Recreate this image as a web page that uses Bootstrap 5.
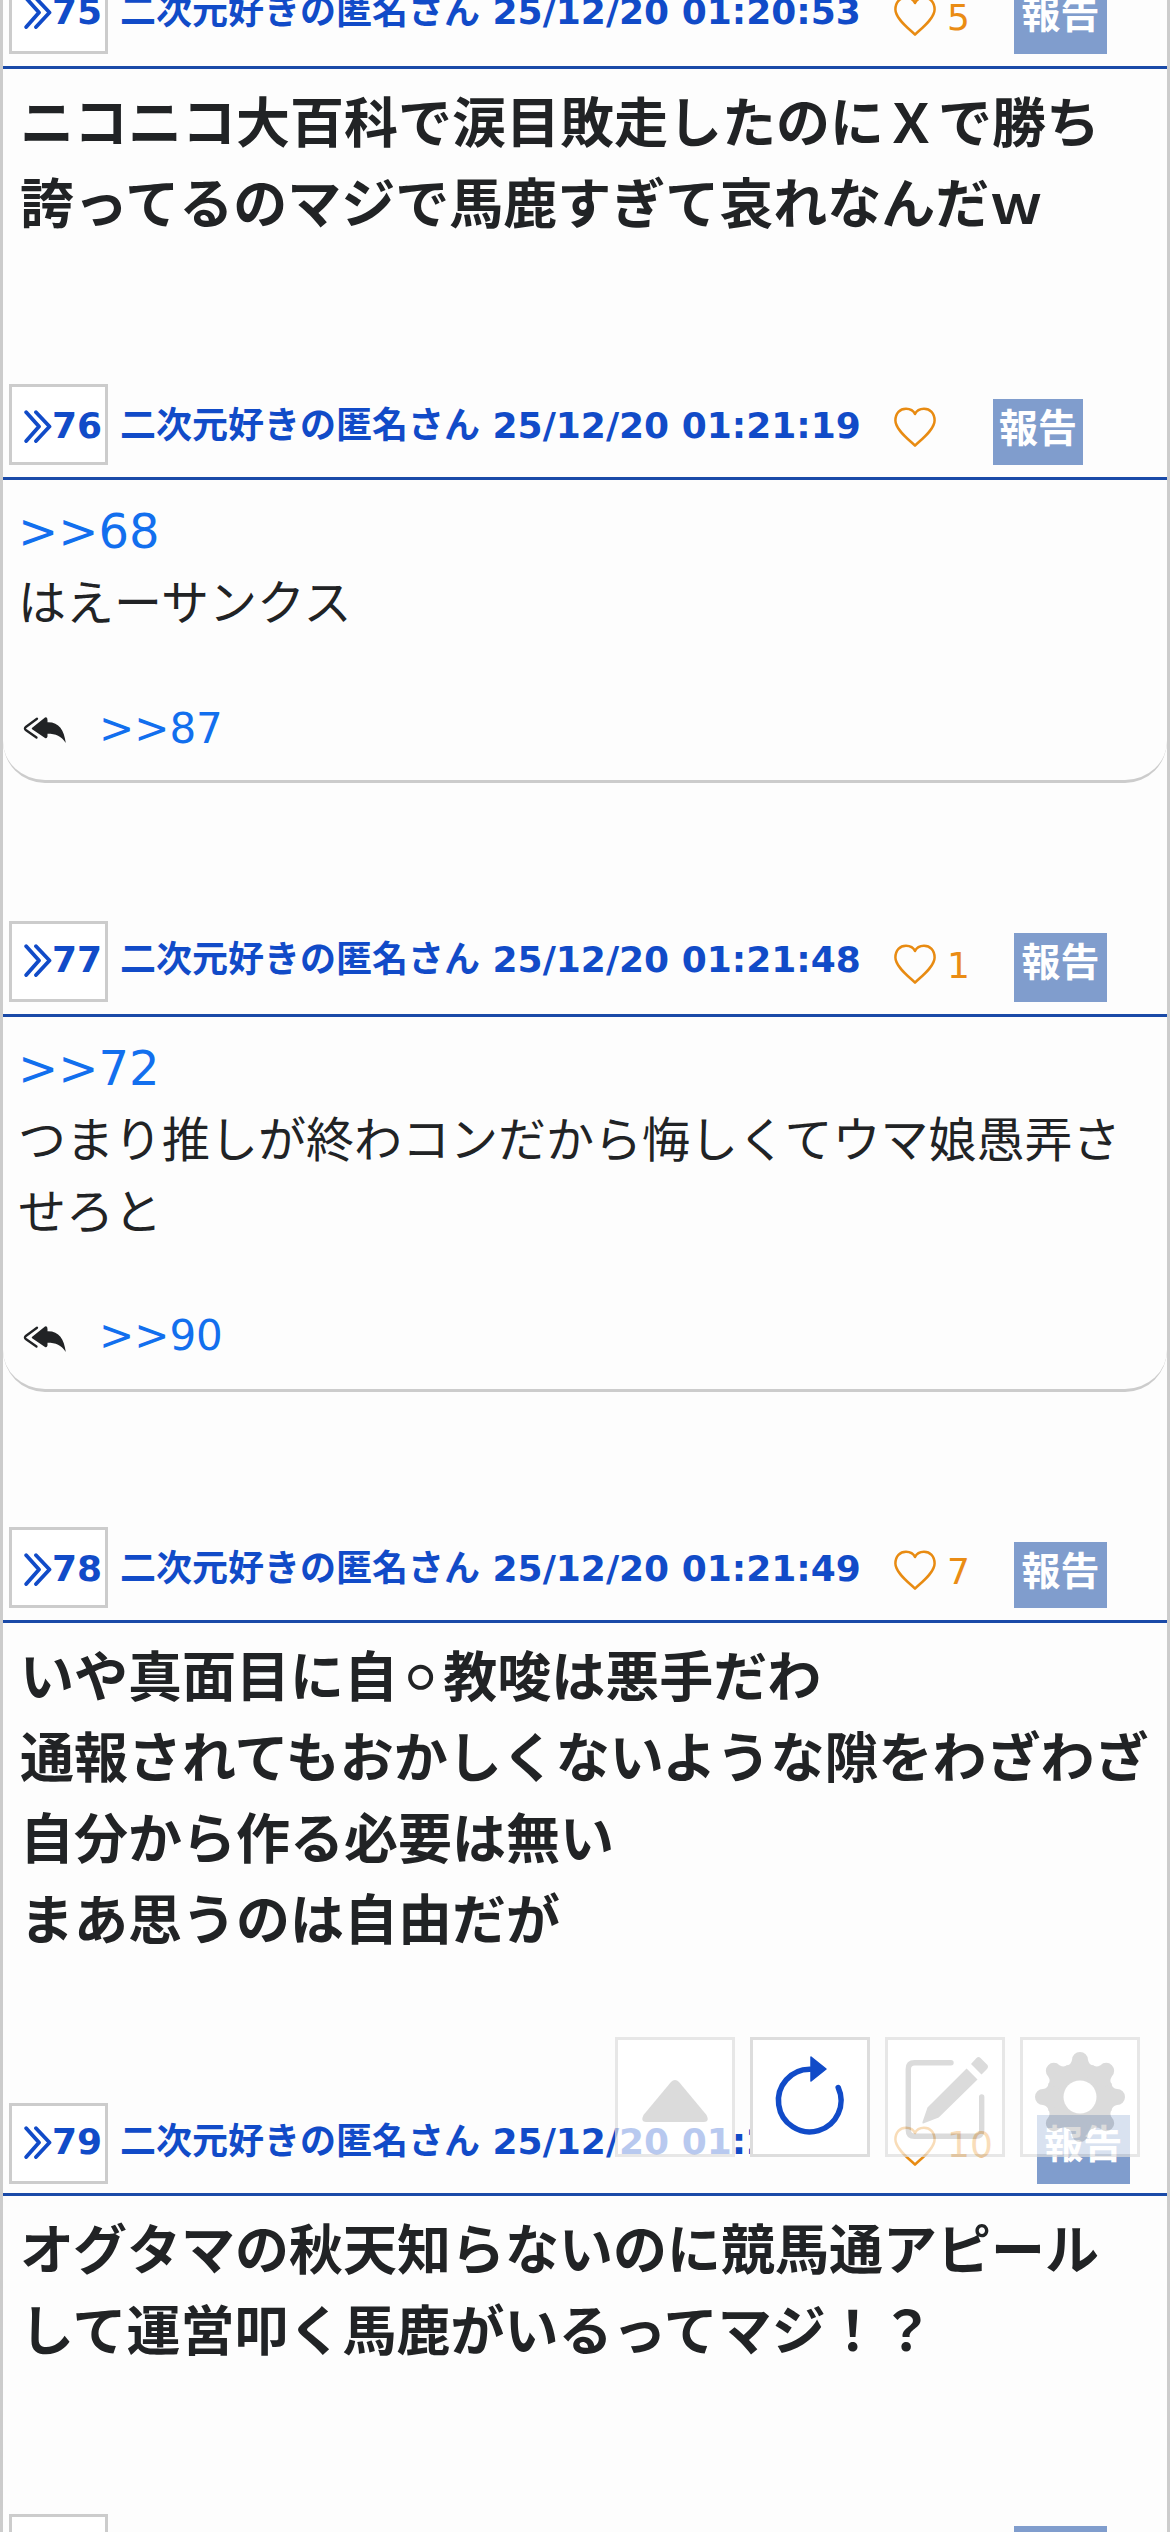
<!DOCTYPE html>
<html lang="ja">
<head>
<meta charset="utf-8">
<meta name="viewport" content="width=device-width, initial-scale=1">
<title>二次元好きの匿名さん</title>
<link href="https://cdn.jsdelivr.net/npm/bootstrap@5.3.0/dist/css/bootstrap.min.css" rel="stylesheet">
<style>
body{background:#fdfdfd;color:#212325;font-family:"DejaVu Sans","Noto Sans CJK JP",sans-serif;overflow:hidden}
.thread{height:2532px;border-left:3px solid #ccc;border-right:3px solid #ccc;overflow:hidden}
.thread-top{margin-top:-27px}
.res-head{--base:12px;height:96px;padding-left:6px;border-bottom:3px solid #1a4aa8;color:#114bc8;font-size:36px;line-height:54px}
.res-head.lowered{--base:15px}
.res-head.tight{height:93px}
.res-no{width:99px;height:81px;border:3px solid #ccc;background:#fff;padding:calc(var(--base) - 3px) 0 0 12px}
.res-no svg{width:28px;height:33px;margin-top:11px}
.res-name{margin:var(--base) 0 0 12px;width:741px}
.heart{width:42px;height:40px;margin:23px 0 0 33px}
.like-num{margin:18px 0 0 11px;color:#ea8c14}
.like-num.up{margin-top:15px}
.report{margin:12px 0 0 44px;width:93px;height:69px;background:#809dcd;color:#fff;font-size:39px;line-height:60px}
.report.short{height:66px;margin-top:15px}
.report.slim{width:90px;margin-left:46px}
.res-body{padding:15px 15px 0}
.strong-text{padding-left:17px;padding-right:13px;font-size:54px;line-height:81px;font-weight:700}
.plain-text{font-size:48px;line-height:72px}
.anchor{color:#126fee;text-decoration:none}
.rounded-end-card{border-bottom:3px solid #ccc;border-radius:0 0 42px 42px}
.replies{font-size:42px;line-height:63px;padding-bottom:20px}
.replies svg{width:43px;height:26px;margin:3px 0 0 5px}
.replies .anchor{margin-left:33px}
.replies.high{padding-bottom:22px}
.replies.high svg{margin-top:7px}
.post-75{height:315px}.post-76{height:303px;margin-bottom:138px}.post-77{height:375px;margin-bottom:135px}.post-78{height:480px}.post-79{height:318px}
.tools{right:30px;bottom:375px;gap:15px}
.tool{width:120px;height:120px;border:3px solid #ddd;background:#fff;color:#ccc;opacity:.7;padding:0}
.tool.active-tool{opacity:1;color:#114bc8}
.tool svg{display:block;width:114px;height:114px}
</style>
<script src="https://cdn.jsdelivr.net/npm/bootstrap@5.3.0/dist/js/bootstrap.bundle.min.js"></script>
</head>
<body>
<svg class="d-none">
  <symbol id="chev" viewBox="0 0 28 33"><path d="M2.200 2.200 15 16.500 2.200 31M12 2.200 25.500 16.500 12 31" fill="none" stroke="currentColor" stroke-width="3.800" stroke-linecap="round" stroke-linejoin="round"/></symbol>
  <symbol id="heart" viewBox="0 0 42 40"><path d="M21 38.600C16 33.500 1.400 23 1.400 13.500C1.400 6 6 1.700 12 1.700C16.500 1.700 19.500 3.600 21 7C22.500 3.600 25.500 1.700 30 1.700C36 1.700 40.600 6 40.600 13.500C40.600 23 26 33.500 21 38.600Z" fill="none" stroke="#e88b12" stroke-width="2.500" stroke-linejoin="round"/></symbol>
  <symbol id="reply" viewBox="0 0 43 26"><path d="M9.500 10.500 22 .6Q24.500-.4 24.500 3V5.300C36 5 41 13 42.800 26C38 19 33 16.800 24.500 16.800V19.500Q24 22 22 21L9.500 12.500Q8 11.500 9.500 10.500Z" fill="currentColor"/><path d="M14 1.800 2.800 10Q1 11.500 2.800 13L13.500 20.500" fill="none" stroke="currentColor" stroke-width="2.300" stroke-linecap="round"/></symbol>
</svg>
<main class="thread">
  <div class="thread-top">
    <article>
      <header class="res-head d-flex align-items-start">
        <div class="res-no d-flex align-items-start fw-bold"><svg><use href="#chev"/></svg>75</div>
        <div class="res-name fw-bold text-nowrap">二次元好きの匿名さん 25/12/20 01:20:53</div>
        <svg class="heart"><use href="#heart"/></svg><span class="like-num">5</span>
        <div class="report fw-bold text-center">報告</div>
      </header>
      <div class="res-body strong-text post-75">ニコニコ大百科で涙目敗走したのにＸで勝ち<br>誇ってるのマジで馬鹿すぎて哀れなんだｗ</div>
    </article>
    <article>
      <header class="res-head lowered d-flex align-items-start">
        <div class="res-no d-flex align-items-start fw-bold"><svg><use href="#chev"/></svg>76</div>
        <div class="res-name fw-bold text-nowrap">二次元好きの匿名さん 25/12/20 01:21:19</div>
        <svg class="heart"><use href="#heart"/></svg><span class="like-num"></span>
        <div class="report short slim fw-bold text-center">報告</div>
      </header>
      <div class="res-body rounded-end-card plain-text d-flex flex-column post-76">
        <div><a class="anchor" href="#">&gt;&gt;68</a><br>はえーサンクス</div>
        <div class="replies mt-auto d-flex align-items-center"><svg><use href="#reply"/></svg><a class="anchor" href="#">&gt;&gt;87</a></div>
      </div>
    </article>
    <article>
      <header class="res-head d-flex align-items-start">
        <div class="res-no d-flex align-items-start fw-bold"><svg><use href="#chev"/></svg>77</div>
        <div class="res-name fw-bold text-nowrap">二次元好きの匿名さん 25/12/20 01:21:48</div>
        <svg class="heart"><use href="#heart"/></svg><span class="like-num">1</span>
        <div class="report fw-bold text-center">報告</div>
      </header>
      <div class="res-body rounded-end-card plain-text d-flex flex-column post-77">
        <div><a class="anchor" href="#">&gt;&gt;72</a><br>つまり推しが終わコンだから悔しくてウマ娘愚弄さ<br>せろと</div>
        <div class="replies high mt-auto d-flex align-items-center"><svg><use href="#reply"/></svg><a class="anchor" href="#">&gt;&gt;90</a></div>
      </div>
    </article>
    <article>
      <header class="res-head lowered d-flex align-items-start">
        <div class="res-no d-flex align-items-start fw-bold"><svg><use href="#chev"/></svg>78</div>
        <div class="res-name fw-bold text-nowrap">二次元好きの匿名さん 25/12/20 01:21:49</div>
        <svg class="heart"><use href="#heart"/></svg><span class="like-num">7</span>
        <div class="report short fw-bold text-center">報告</div>
      </header>
      <div class="res-body strong-text text-nowrap post-78">いや真面目に自⚪&#xFE0E;教唆は悪手だわ<br>通報されてもおかしくないような隙をわざわざ<br>自分から作る必要は無い<br>まあ思うのは自由だが</div>
    </article>
    <article>
      <header class="res-head tight d-flex align-items-start">
        <div class="res-no d-flex align-items-start fw-bold"><svg><use href="#chev"/></svg>79</div>
        <div class="res-name fw-bold text-nowrap">二次元好きの匿名さん 25/12/20 01:21:58</div>
        <svg class="heart"><use href="#heart"/></svg><span class="like-num up">10</span>
        <div class="report fw-bold text-center">報告</div>
      </header>
      <div class="res-body strong-text post-79">オグタマの秋天知らないのに競馬通アピール<br>して運営叩く馬鹿がいるってマジ！？</div>
    </article>
    <article>
      <header class="res-head d-flex align-items-start">
        <div class="res-no"></div>
        <div class="res-name"></div>
        <div class="report ms-auto" style="margin-right:60px"></div>
      </header>
    </article>
  </div>
</main>
<nav class="tools position-fixed d-flex">
  <button class="tool"><svg viewBox="0 0 114 114"><path d="M53 42Q57 38 61 42L88.500 75Q92 82 86 82H28Q22 82 25.500 75Z" fill="currentColor"/></svg></button>
  <button class="tool active-tool"><svg viewBox="0 0 114 114"><path d="M57 29.200A31.300 31.300 0 1 0 85.200 47.500" fill="none" stroke="currentColor" stroke-width="5.500" stroke-linecap="round"/><path d="M58 17 73 29 58 41Z" fill="currentColor" stroke="currentColor" stroke-width="1.500" stroke-linejoin="round"/></svg></button>
  <button class="tool"><svg viewBox="0 0 114 114"><path d="M63 22.700H26.500Q20.300 22.700 20.300 29V90Q20.300 96.300 26.500 96.300H87.500Q93.700 96.300 93.700 90V57" fill="none" stroke="currentColor" stroke-width="5.400" stroke-linecap="round"/><path d="M78.600 28.500 89.500 39.500 50.700 77.500 35.200 83.500Q34 83.500 34.500 82L39.500 67.500ZM83 24 88.500 18Q90.500 16 92.500 18L99 24.500Q101 26.500 99 29L93.500 34.500Z" fill="currentColor"/></svg></button>
  <button class="tool"><svg viewBox="-57 -57 114 114"><defs><path id="tooth" d="M0 0-13.600-31.500Q-9-32-8-37A8 8 0 0 1 8-37Q9-32 13.600-31.500Z"/><mask id="hole" maskUnits="userSpaceOnUse" x="-57" y="-57" width="114" height="114"><path d="M-57-57H57V57H-57Z" fill="#fff"/><circle r="16.500" fill="#000"/></mask></defs><g fill="currentColor" mask="url(#hole)"><circle r="31"/><use href="#tooth"/><use href="#tooth" transform="rotate(45)"/><use href="#tooth" transform="rotate(90)"/><use href="#tooth" transform="rotate(135)"/><use href="#tooth" transform="rotate(180)"/><use href="#tooth" transform="rotate(225)"/><use href="#tooth" transform="rotate(270)"/><use href="#tooth" transform="rotate(315)"/></g></svg></button>
</nav>
</body>
</html>
